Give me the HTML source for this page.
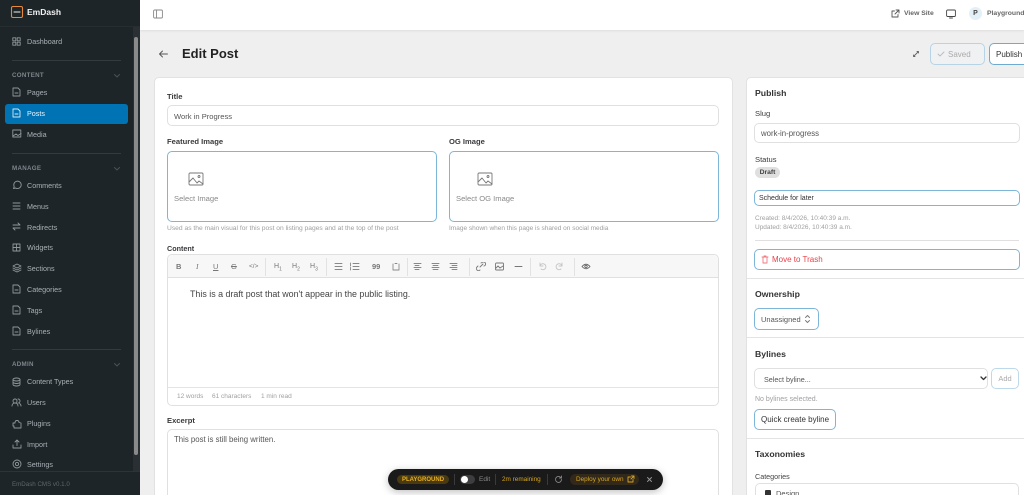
<!DOCTYPE html>
<html><head><meta charset="utf-8"><style>
*{box-sizing:border-box}
html,body{margin:0;width:1024px;height:495px;overflow:hidden;background:#efefef}
#r{position:relative;width:1024px;height:495px;overflow:hidden;background:#efefef;font-family:"Liberation Sans",sans-serif;color:#27272a}
.t{position:absolute;white-space:nowrap;line-height:12px}
.b{position:absolute;background:#fff}
svg{position:absolute;fill:none;stroke:currentColor;stroke-width:.9;stroke-linecap:round;stroke-linejoin:round}
.n{color:#a9b1b6;font-size:7.2px;left:27px}
.h{color:#7d868c;font-size:6.2px;font-weight:bold;left:12px;letter-spacing:.3px}
.d{position:absolute;left:12px;width:109px;height:1px;background:#333b40}
.ic{color:#8f979c}
.l{font-size:7.6px;font-weight:bold;color:#3a3a3d}
.sm{font-size:6.5px;color:#a0a0a4}
.in{border:1px solid #e0e0e0;border-radius:5px}
.fo{border:1px solid #7eb6d9;border-radius:5px}
.tb{color:#777;font-size:7.5px}
</style></head><body><div id="r">
<div class="b" style="left:140px;top:0;width:884px;height:30px;box-shadow:0 1px 2px #ddd"></div>
<div style="position:absolute;left:0;top:0;width:140px;height:495px;background:#1e2529"></div>
<svg style="left:10px;top:5px;color:#e8863a;stroke-width:1.1" width="14" height="14" viewBox="0 0 14 14"><rect x="1.500" y="1.500" width="11" height="11" rx="1.500"/><path d="M4 7h6" stroke="#eee"/></svg>
<div class="t" style="left:27px;top:6px;color:#f2f2f2;font-size:8.500px;font-weight:bold">EmDash</div>
<div style="position:absolute;left:0;top:26px;width:140px;height:1px;background:#262d31"></div>
<div style="position:absolute;left:133px;top:27px;width:7px;height:444px;background:#2a2f33"></div>
<div style="position:absolute;left:134px;top:37px;width:4px;height:418px;background:#8a8a8a;border-radius:2px"></div>
<div style="position:absolute;left:5px;top:104px;width:123px;height:20px;background:#0073b5;border-radius:3px"></div>
<div class="t n" style="top:36px">Dashboard</div>
<svg class="ic" style="left:12px;top:37px" width="9" height="9" viewBox="0 0 9 9" ><rect x=".8" y=".8" width="3" height="3"/><rect x="5.200" y=".8" width="3" height="3"/><rect x=".8" y="5.200" width="3" height="3"/><rect x="5.200" y="5.200" width="3" height="3"/></svg>
<div class="d" style="top:60px"></div><div class="d" style="top:153px"></div><div class="d" style="top:349px"></div>
<div class="t h" style="top:70px">CONTENT</div><div class="t h" style="top:163px">MANAGE</div><div class="t h" style="top:359px">ADMIN</div>
<svg style="left:113px;top:73px;color:#4c5459" width="8" height="6"><path d="M1.500 1.500l2.500 2.500 2.500-2.500"/></svg>
<svg style="left:113px;top:166px;color:#4c5459" width="8" height="6"><path d="M1.500 1.500l2.500 2.500 2.500-2.500"/></svg>
<svg style="left:113px;top:362px;color:#4c5459" width="8" height="6"><path d="M1.500 1.500l2.500 2.500 2.500-2.500"/></svg>
<div class="t n" style="top:87px">Pages</div><div class="t n" style="top:108px;color:#eaf4fa">Posts</div><div class="t n" style="top:129px">Media</div>
<div class="t n" style="top:180px">Comments</div><div class="t n" style="top:201px">Menus</div><div class="t n" style="top:222px">Redirects</div><div class="t n" style="top:242px">Widgets</div><div class="t n" style="top:263px">Sections</div><div class="t n" style="top:284px">Categories</div><div class="t n" style="top:305px">Tags</div><div class="t n" style="top:326px">Bylines</div>
<div class="t n" style="top:376px">Content Types</div><div class="t n" style="top:397px">Users</div><div class="t n" style="top:418px">Plugins</div><div class="t n" style="top:439px">Import</div><div class="t n" style="top:459px">Settings</div>
<svg class="ic" style="left:12px;top:87px" width="9" height="10" viewBox="0 0 9 10"><path d="M1 1h5l2 2v6H1z"/><path d="M3 6h3"/></svg>
<svg style="left:12px;top:108px;color:#d5e9f5" width="9" height="10" viewBox="0 0 9 10"><path d="M1 1h5l2 2v6H1z"/><path d="M3 6h3"/></svg>
<svg class="ic" style="left:12px;top:129px" width="10" height="9" viewBox="0 0 10 9"><rect x=".8" y="1" width="8" height="7"/><path d="M1 7l3-2 2 1.500 3-2"/></svg>
<svg class="ic" style="left:12px;top:180px" width="10" height="10" viewBox="0 0 10 10"><path d="M1.500 8.500l.7-2A3.700 3.700 0 1 1 3.600 8z"/></svg>
<svg class="ic" style="left:12px;top:202px" width="9" height="8" viewBox="0 0 9 8"><path d="M1 1h7M1 4h7M1 7h7"/></svg>
<svg class="ic" style="left:12px;top:222px" width="9" height="9" viewBox="0 0 9 9"><path d="M1 3h7M6 1l2 2M1 6h7M3 8L1 6"/></svg>
<svg class="ic" style="left:12px;top:243px" width="9" height="9" viewBox="0 0 9 9"><rect x="1" y="1" width="7" height="7"/><path d="M1 4.500h7M4.500 1v7"/></svg>
<svg class="ic" style="left:12px;top:263px" width="10" height="10" viewBox="0 0 10 10"><path d="M5 1l4 2-4 2-4-2zM1 5l4 2 4-2M1 7l4 2 4-2"/></svg>
<svg class="ic" style="left:12px;top:284px" width="9" height="10" viewBox="0 0 9 10"><path d="M1 1h5l2 2v6H1z"/><path d="M3 6h3"/></svg>
<svg class="ic" style="left:12px;top:305px" width="9" height="10" viewBox="0 0 9 10"><path d="M1 1h5l2 2v6H1z"/><path d="M3 6h3"/></svg>
<svg class="ic" style="left:12px;top:326px" width="9" height="10" viewBox="0 0 9 10"><path d="M1 1h5l2 2v6H1z"/><path d="M3 6h3"/></svg>
<svg class="ic" style="left:12px;top:377px" width="9" height="10" viewBox="0 0 9 10"><ellipse cx="4.500" cy="2.500" rx="3.500" ry="1.500"/><path d="M1 2.500v5c0 .8 1.500 1.500 3.500 1.500S8 8.300 8 7.500v-5M1 5c0 .8 1.500 1.500 3.500 1.500S8 5.800 8 5"/></svg>
<svg class="ic" style="left:11px;top:398px" width="11" height="9" viewBox="0 0 11 9"><circle cx="4" cy="3" r="2"/><path d="M1 8c0-4 6-4 6 0M7 1a2 2 0 0 1 0 4M8.500 5.500Q10 6.200 10 8"/></svg>
<svg class="ic" style="left:12px;top:419px" width="10" height="10" viewBox="0 0 10 10"><path d="M1 4h2q0-2.500 2-2.500T7 3.500L9 4v5H2V7H1z"/></svg>
<svg class="ic" style="left:12px;top:439px" width="10" height="10" viewBox="0 0 10 10"><path d="M5 6.500V1M3 3l2-2 2 2M1 6v3h8V6"/></svg>
<svg class="ic" style="left:12px;top:459px" width="10" height="10" viewBox="0 0 10 10"><circle cx="5" cy="5" r="1.600"/><circle cx="5" cy="5" r="4"/></svg>
<div style="position:absolute;left:0;top:471px;width:140px;height:1px;background:#2d3438"></div>
<div class="t" style="left:12px;top:479px;color:#5d666c;font-size:6.200px">EmDash CMS v0.1.0</div>

<svg style="left:153px;top:9px;color:#888" width="10" height="10" viewBox="0 0 10 10"><rect x=".6" y="1" width="8.800" height="8" rx="1"/><path d="M3.500 1v8"/></svg>
<svg style="left:891px;top:9px;color:#555" width="9" height="9" viewBox="0 0 9 9"><path d="M7 5.500V8H1V2h2.500M5 1h3v3M8 1L4 5"/></svg>
<div class="t" style="left:904px;top:8px;font-size:6.800px;font-weight:bold;color:#666">View Site</div>
<svg style="left:946px;top:9px;color:#444" width="10" height="10" viewBox="0 0 10 10"><rect x=".6" y="1" width="8.800" height="6.500" rx="1"/><path d="M3.500 9h3"/></svg>
<div style="position:absolute;left:969px;top:7px;width:13px;height:13px;border-radius:50%;background:#e4f0f7;color:#444;font-size:7px;font-weight:bold;text-align:center;line-height:13px">P</div>
<div class="t" style="left:987px;top:8px;font-size:6.800px;font-weight:bold;color:#666">Playground U</div>

<svg style="left:158px;top:49px;color:#555" width="11" height="10" viewBox="0 0 11 10"><path d="M9.500 5h-8M4.500 2l-3 3 3 3"/></svg>
<div class="t" style="left:182px;top:47px;font-size:13px;font-weight:bold;color:#222;line-height:14px">Edit Post</div>
<svg style="left:912px;top:50px;color:#666" width="8" height="8" viewBox="0 0 8 8"><path d="M2 6l4-4"/><path d="M5 1.500h1.500V3M1.500 5v1.500H3"/></svg>
<div style="position:absolute;left:930px;top:43px;width:55px;height:22px;border:1px solid #b7d4e6;border-radius:5px;background:#f0f1f3"></div>
<svg style="left:937px;top:50px;color:#bbb" width="8" height="8" viewBox="0 0 8 8"><path d="M1 4l2 2 4-4"/></svg>
<div class="t" style="left:948px;top:49px;font-size:8px;color:#aaa">Saved</div>
<div style="position:absolute;left:989px;top:43px;width:50px;height:22px;border:1px solid #6fabd0;border-radius:5px;background:#fff"></div>
<div class="t" style="left:996px;top:49px;font-size:8px;color:#333">Publish</div>

<div class="b" style="left:154px;top:77px;width:579px;height:430px;border:1px solid #e2e2e2;border-radius:5px"></div>
<div class="b" style="left:746px;top:77px;width:290px;height:430px;border:1px solid #e2e2e2;border-radius:5px"></div>

<div class="t l" style="left:167px;top:91px">Title</div>
<div class="b in" style="left:167px;top:105px;width:552px;height:21px"></div>
<div class="t" style="left:174px;top:111px;font-size:7.600px;color:#555">Work in Progress</div>
<div class="t l" style="left:167px;top:136px">Featured Image</div>
<div class="t l" style="left:449px;top:136px">OG Image</div>
<div class="b fo" style="left:167px;top:151px;width:270px;height:71px"></div>
<div class="b fo" style="left:449px;top:151px;width:270px;height:71px"></div>
<svg style="left:188px;top:172px;color:#777" width="16" height="14" viewBox="0 0 16 14"><rect x="1" y="1" width="14" height="12" rx="1"/><path d="M1 10l4-4 4 5 2-2 4 3"/><circle cx="11" cy="4.500" r="1"/></svg>
<svg style="left:477px;top:172px;color:#777" width="16" height="14" viewBox="0 0 16 14"><rect x="1" y="1" width="14" height="12" rx="1"/><path d="M1 10l4-4 4 5 2-2 4 3"/><circle cx="11" cy="4.500" r="1"/></svg>
<div class="t" style="left:174px;top:193px;font-size:7.600px;color:#8a8a8a">Select Image</div>
<div class="t" style="left:456px;top:193px;font-size:7.600px;color:#8a8a8a">Select OG Image</div>
<div class="t sm" style="left:167px;top:223px;font-size:6.700px">Used as the main visual for this post on listing pages and at the top of the post</div>
<div class="t sm" style="left:449px;top:223px">Image shown when this page is shared on social media</div>

<div class="t l" style="left:167px;top:243px;font-size:7.200px">Content</div>
<div class="b in" style="left:167px;top:254px;width:552px;height:152px"></div>
<div style="position:absolute;left:168px;top:255px;width:550px;height:23px;background:#f7f7f7;border-bottom:1px solid #e0e0e0;border-radius:5px 5px 0 0"></div>
<div class="t tb" style="left:176px;top:261px;font-weight:bold">B</div>
<div class="t tb" style="left:196px;top:261px;font-style:italic;font-family:'Liberation Serif',serif">I</div>
<div class="t tb" style="left:213px;top:261px;text-decoration:underline">U</div>
<div class="t tb" style="left:231px;top:261px;text-decoration:line-through">G</div>
<div class="t tb" style="left:249px;top:261px;font-size:6.500px">&lt;/&gt;</div>
<div class="t tb" style="left:274px;top:261px;font-size:7px">H<sub style="font-size:5px;line-height:0">1</sub></div>
<div class="t tb" style="left:292px;top:261px;font-size:7px">H<sub style="font-size:5px;line-height:0">2</sub></div>
<div class="t tb" style="left:310px;top:261px;font-size:7px">H<sub style="font-size:5px;line-height:0">3</sub></div>
<div class="t tb" style="left:372px;top:261px;font-weight:bold">99</div>
<svg style="left:334px;top:262px;color:#888" width="130" height="9" viewBox="0 0 130 9"><path d="M1 1.500h7M1 4.500h7M1 7.500h7M19 1.500h6M19 4.500h6M19 7.500h6M16.500 1v3M16.500 5.500v2.500M59 2v6h6V2M61 1.500h2M80 1.500h7M81 3.500h4M80 5.500h7M81 7.500h4M98 1.500h7M99 3.500h5M98 5.500h7M99 7.500h5M116 1.500h7M118 3.500h5M116 5.500h7M118 7.500h5"/></svg>
<svg style="left:476px;top:262px;color:#777" width="100" height="9" viewBox="0 0 100 9"><path d="M4 5l3-3M2 4L1 5a2 2 0 0 0 3 3M5 1l1-.5a2 2 0 0 1 3 3L8 4"/><rect x="19.500" y="1" width="8" height="7" rx="1"/><path d="M20 6l2-2 2 2 3-2M39 4.500h7"/></svg>
<svg style="left:538px;top:262px;color:#c4c4c4" width="30" height="9" viewBox="0 0 30 9"><path d="M2 1v3h3M2 4a3 3 0 1 1 1 3M24 1v3h-3M24 4a3 3 0 1 0-1 3"/></svg>
<svg style="left:581px;top:262px;color:#666" width="10" height="9" viewBox="0 0 10 9"><path d="M1 4.500Q5 0 9 4.500 5 9 1 4.500z"/><circle cx="5" cy="4.500" r="1.200"/></svg>
<div style="position:absolute;left:265px;top:258px;width:1px;height:18px;background:#e2e2e2"></div>
<div style="position:absolute;left:326px;top:258px;width:1px;height:18px;background:#e2e2e2"></div>
<div style="position:absolute;left:407px;top:258px;width:1px;height:18px;background:#e2e2e2"></div>
<div style="position:absolute;left:469px;top:258px;width:1px;height:18px;background:#e2e2e2"></div>
<div style="position:absolute;left:530px;top:258px;width:1px;height:18px;background:#e2e2e2"></div>
<div style="position:absolute;left:574px;top:258px;width:1px;height:18px;background:#e2e2e2"></div>
<div class="t" style="left:190px;top:288px;font-size:8.900px;color:#444">This is a draft post that won't appear in the public listing.</div>
<div style="position:absolute;left:168px;top:387px;width:550px;height:1px;background:#e4e4e4"></div>
<div class="t sm" style="left:177px;top:391px">12 words</div><div class="t sm" style="left:212px;top:391px">61 characters</div><div class="t sm" style="left:261px;top:391px">1 min read</div>
<div class="t l" style="left:167px;top:415px">Excerpt</div>
<div class="b in" style="left:167px;top:429px;width:552px;height:80px"></div>
<div class="t" style="left:174px;top:434px;font-size:7.800px;color:#555">This post is still being written.</div>

<div class="t" style="left:755px;top:87px;font-size:8.700px;font-weight:bold;color:#333">Publish</div>
<div class="t l" style="left:755px;top:108px;font-weight:normal">Slug</div>
<div class="b in" style="left:754px;top:123px;width:266px;height:20px"></div>
<div class="t" style="left:761px;top:128px;font-size:7.800px;color:#555">work-in-progress</div>
<div class="t l" style="left:755px;top:154px;font-weight:normal">Status</div>
<div style="position:absolute;left:755px;top:167px;width:25px;height:11px;border-radius:6px;background:#dfdfdf;color:#444;font-size:6.800px;font-weight:bold;text-align:center;line-height:11px">Draft</div>
<div class="b fo" style="left:754px;top:190px;width:266px;height:16px"></div>
<div class="t" style="left:759px;top:193px;font-size:7px;color:#333">Schedule for later</div>
<div class="t sm" style="left:755px;top:213px">Created: 8/4/2026, 10:40:39 a.m.</div>
<div class="t sm" style="left:755px;top:222px">Updated: 8/4/2026, 10:40:39 a.m.</div>
<div style="position:absolute;left:755px;top:240px;width:264px;height:1px;background:#e0e0e0"></div>
<div class="b fo" style="left:754px;top:249px;width:266px;height:21px"></div>
<svg style="left:761px;top:255px;color:#f07a80" width="8" height="9" viewBox="0 0 8 9"><path d="M1 2h6M2 2v6h4V2M3 1h2"/></svg>
<div class="t" style="left:772px;top:254px;font-size:8px;color:#e8404a">Move to Trash</div>
<div style="position:absolute;left:747px;top:278px;width:277px;height:1px;background:#e4e4e4"></div>
<div class="t" style="left:755px;top:288px;font-size:8.700px;font-weight:bold;color:#333">Ownership</div>
<div class="b fo" style="left:754px;top:308px;width:65px;height:22px"></div>
<div class="t" style="left:761px;top:314px;font-size:7.500px;color:#555">Unassigned</div>
<svg style="left:804px;top:314px;color:#777" width="7" height="10" viewBox="0 0 7 10"><path d="M1.500 3.500L3.500 1.500l2 2M1.500 6.500l2 2 2-2"/></svg>
<div style="position:absolute;left:747px;top:337px;width:277px;height:1px;background:#e4e4e4"></div>
<div class="t" style="left:755px;top:348px;font-size:8.700px;font-weight:bold;color:#333">Bylines</div>
<div class="b in" style="left:754px;top:368px;width:234px;height:21px"></div>
<div class="t" style="left:764px;top:374px;font-size:7.200px;color:#555">Select byline...</div>
<svg style="left:980px;top:375px;color:#333;stroke-width:1.300" width="7" height="7"><path d="M1 2l2.500 2.500L6 2"/></svg>
<div class="b" style="left:991px;top:368px;width:28px;height:21px;border:1px solid #bdd9ea;border-radius:5px;color:#aaa;font-size:7.500px;text-align:center;line-height:19px">Add</div>
<div class="t sm" style="left:755px;top:394px;font-size:7px">No bylines selected.</div>
<div class="b fo" style="left:754px;top:409px;width:82px;height:21px"></div>
<div class="t" style="left:761px;top:414px;font-size:8px;color:#333">Quick create byline</div>
<div style="position:absolute;left:747px;top:438px;width:277px;height:1px;background:#e4e4e4"></div>
<div class="t" style="left:755px;top:448px;font-size:8.700px;font-weight:bold;color:#333">Taxonomies</div>
<div class="t" style="left:755px;top:471px;font-size:7.200px;color:#444">Categories</div>
<div class="b in" style="left:755px;top:483px;width:264px;height:30px"></div>
<div style="position:absolute;left:765px;top:490px;width:6px;height:6px;background:#333;border-radius:1px"></div>
<div class="t" style="left:776px;top:488px;font-size:7.500px;color:#555">Design</div>

<div style="position:absolute;left:388px;top:469px;width:275px;height:21px;background:#1a1a1a;border-radius:11px;box-shadow:0 2px 8px rgba(0,0,0,.25)"></div>
<div style="position:absolute;left:397px;top:475px;width:52px;height:9px;background:#4a3a12;border-radius:5px;color:#e8b020;font-size:6px;font-weight:bold;text-align:center;line-height:10px">PLAYGROUND</div>
<div style="position:absolute;left:454px;top:474px;width:1px;height:11px;background:#3a3a3a"></div>
<div style="position:absolute;left:460px;top:475px;width:15px;height:9px;background:#3d3d3f;border-radius:5px"></div>
<div style="position:absolute;left:461px;top:476px;width:7px;height:7px;background:#fff;border-radius:50%"></div>
<div class="t" style="left:479px;top:473.500px;font-size:6.500px;color:#888">Edit</div>
<div style="position:absolute;left:495px;top:474px;width:1px;height:11px;background:#3a3a3a"></div>
<div class="t" style="left:502px;top:473.500px;font-size:6.400px;color:#d5a520">2m remaining</div>
<div style="position:absolute;left:547px;top:474px;width:1px;height:11px;background:#3a3a3a"></div>
<svg style="left:554px;top:475px;color:#888" width="9" height="9" viewBox="0 0 9 9"><path d="M7.500 4.500A3 3 0 1 1 6.500 2.200M7.500 1v2h-2"/></svg>
<div style="position:absolute;left:570px;top:474px;width:69px;height:11px;background:#33291a;border-radius:6px"></div>
<div class="t" style="left:576px;top:473.500px;font-size:6.400px;color:#d5a520">Deploy your own</div>
<svg style="left:627px;top:475px;color:#d5a520" width="8" height="8" viewBox="0 0 8 8"><path d="M6 4.500V7H1V2h2.500M4.500 1H7v2.500M7 1L4 4"/></svg>
<svg style="left:646px;top:476px;color:#999" width="7" height="7" viewBox="0 0 7 7"><path d="M1.500 1.500l4 4M5.500 1.500l-4 4"/></svg>
</div></body></html>
